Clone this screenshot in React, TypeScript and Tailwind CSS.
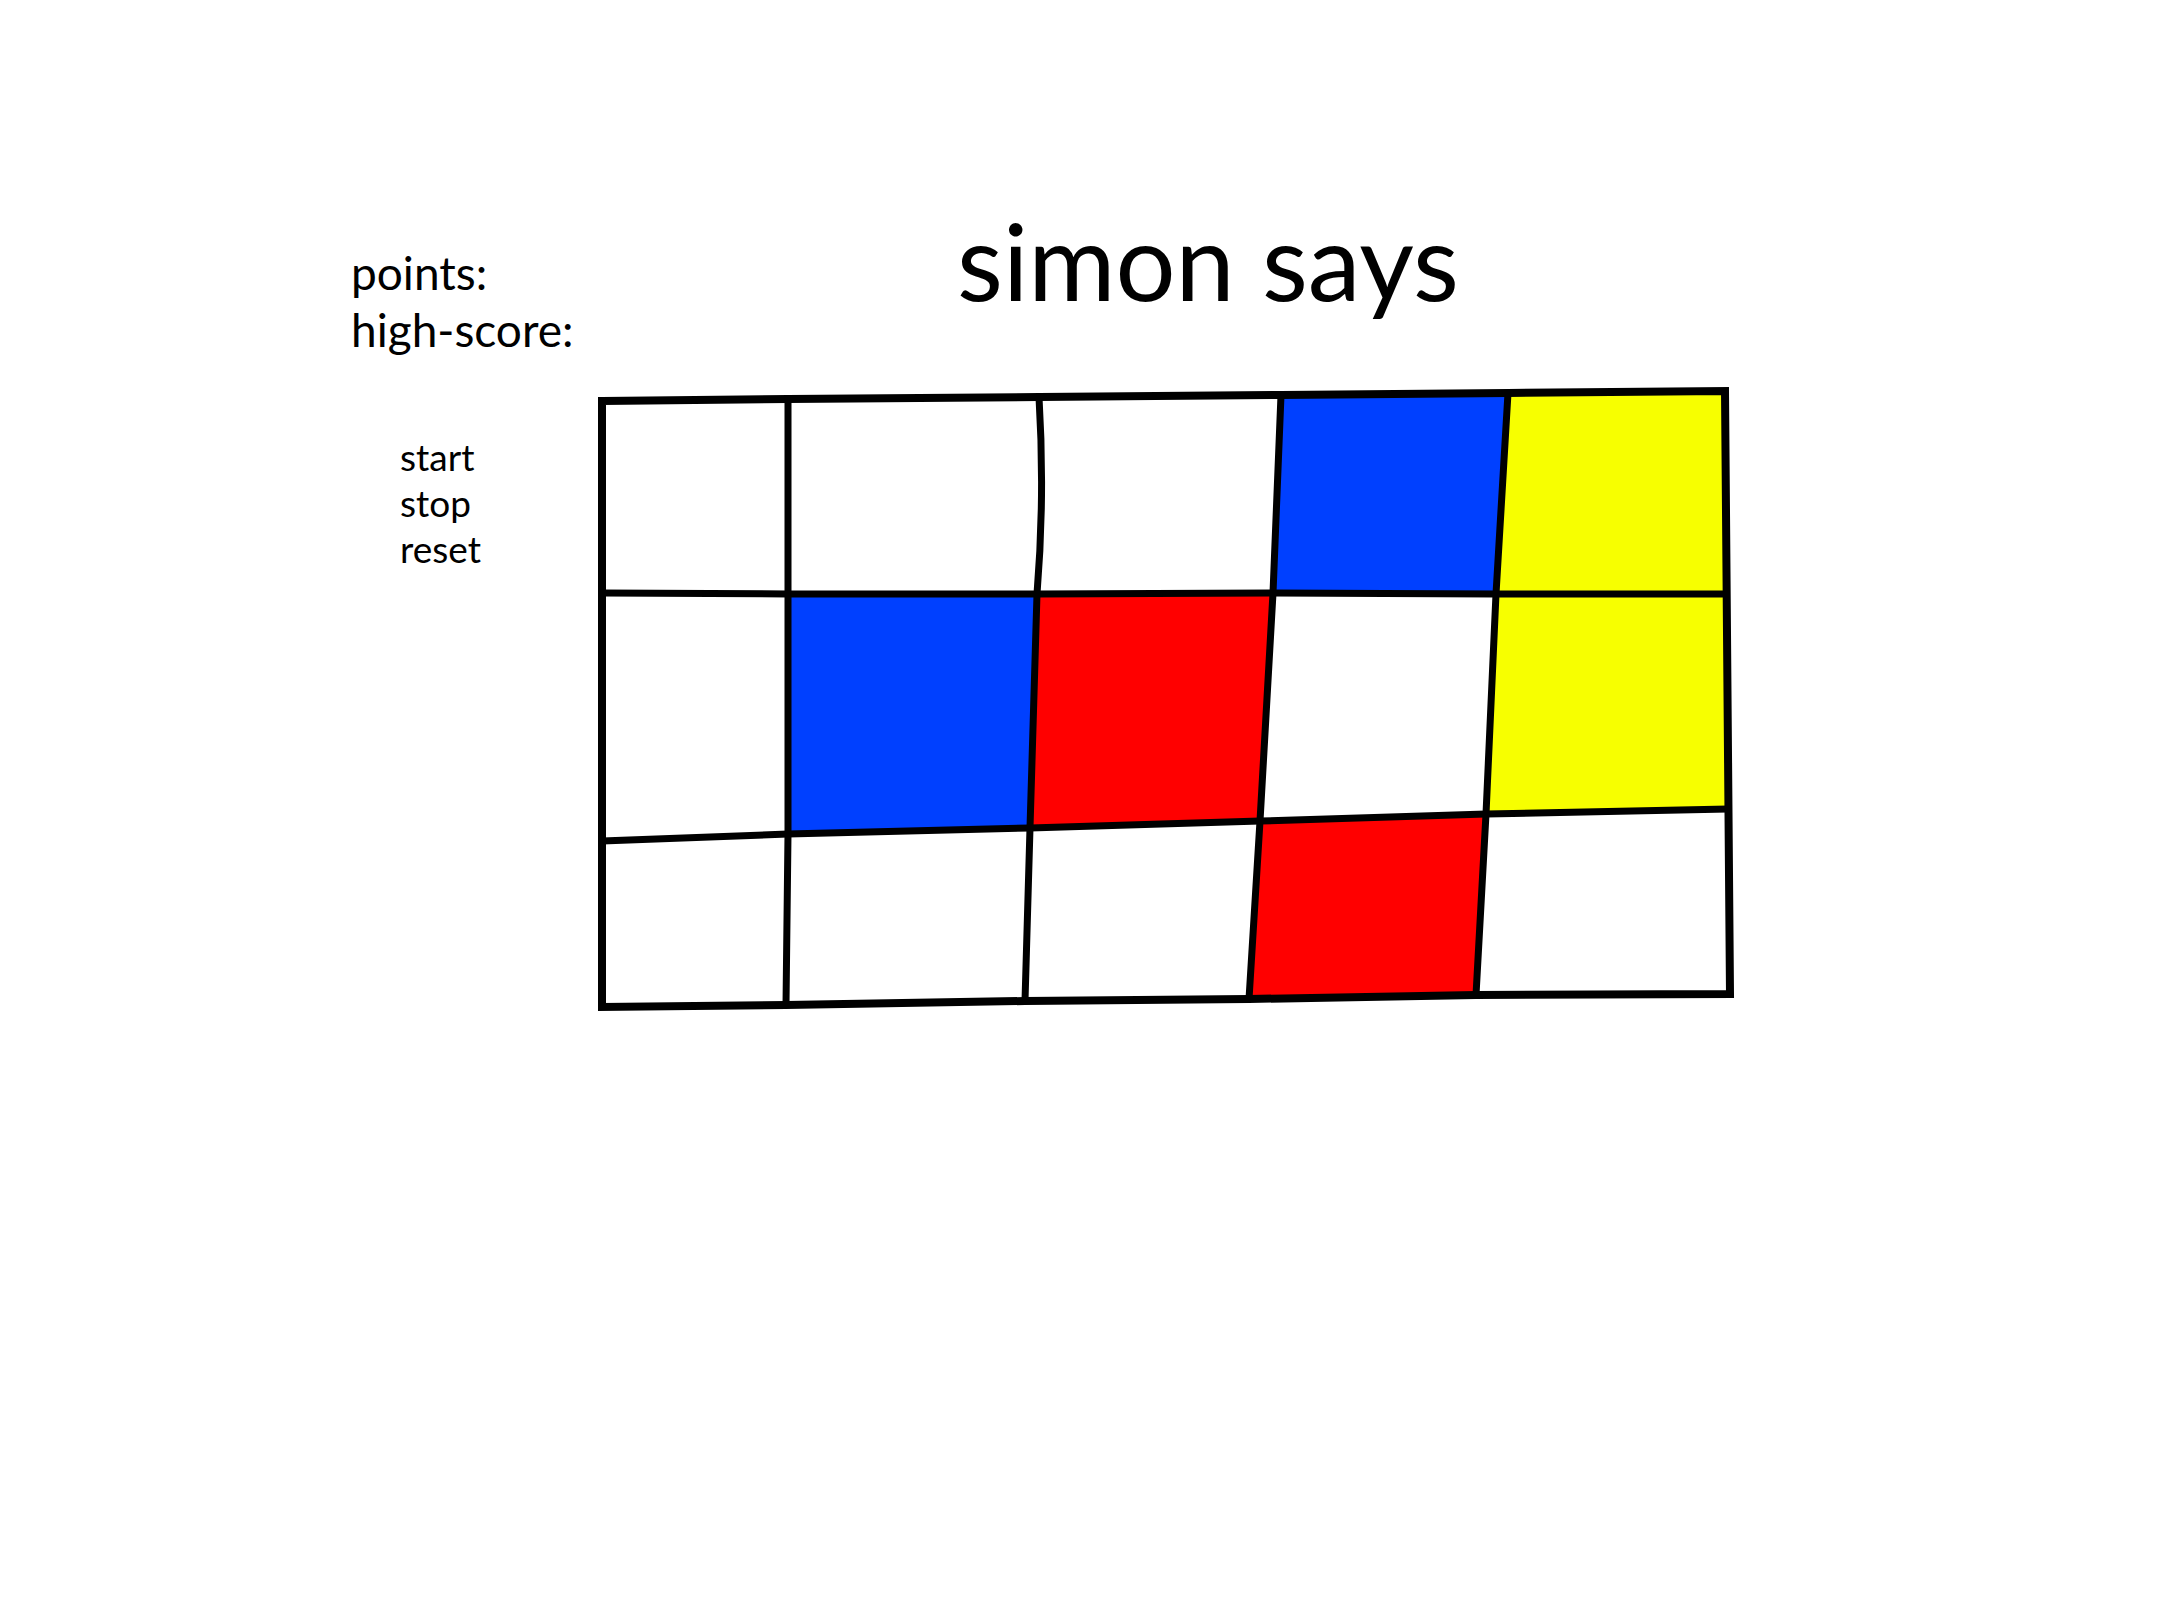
import React from "react";

type Pt = [number, number];

const P: Pt[][] = [
  [[602, 400], [788, 398], [1039, 396], [1281, 394], [1508, 392], [1725, 390]],
  [[602, 592], [788, 593], [1037, 593], [1273, 592], [1496, 593], [1726, 593]],
  [[602, 840], [788, 833], [1030, 827], [1260, 820], [1486, 813], [1728, 808]],
  [[602, 1006], [786, 1004], [1025, 1000], [1249, 998], [1476, 994], [1730, 993]],
];

const BLUE = "#0040ff";
const RED = "#ff0000";
const YELLOW = "#f7ff00";

const filled: { r: number; c: number; color: string }[] = [
  { r: 0, c: 3, color: BLUE },
  { r: 0, c: 4, color: YELLOW },
  { r: 1, c: 1, color: BLUE },
  { r: 1, c: 2, color: RED },
  { r: 1, c: 4, color: YELLOW },
  { r: 2, c: 3, color: RED },
];

const pts = (a: Pt[]) => a.map((p) => `${p[0]},${p[1]}`).join(" ");

function Grid() {
  const outer: Pt[] = [...P[0], ...[...P[3]].reverse()];
  return (
    <svg
      width={1150}
      height={635}
      viewBox="590 380 1150 635"
      className="block shrink-0"
    >
      {filled.map(({ r, c, color }) => (
        <polygon
          key={`${r}-${c}`}
          points={pts([P[r][c], P[r][c + 1], P[r + 1][c + 1], P[r + 1][c]])}
          fill={color}
        />
      ))}
      {[1, 2].map((r) => (
        <polyline
          key={`h${r}`}
          points={pts(P[r])}
          fill="none"
          stroke="#000"
          strokeWidth={7}
          strokeLinejoin="round"
        />
      ))}
      {[1, 3, 4].map((c) => (
        <polyline
          key={`v${c}`}
          points={pts([P[0][c], P[1][c], P[2][c], P[3][c]])}
          fill="none"
          stroke="#000"
          strokeWidth={7}
          strokeLinejoin="round"
        />
      ))}
      <path
        d={`M ${P[0][2][0]} ${P[0][2][1]} Q 1045 495 ${P[1][2][0]} ${P[1][2][1]} L ${P[2][2][0]} ${P[2][2][1]} L ${P[3][2][0]} ${P[3][2][1]}`}
        fill="none"
        stroke="#000"
        strokeWidth={7}
        strokeLinejoin="round"
      />
      <polygon
        points={pts(outer)}
        fill="none"
        stroke="#000"
        strokeWidth={8}
        strokeLinejoin="miter"
      />
    </svg>
  );
}

export default function App() {
  return (
    <div className="w-[2160px] h-[1620px] bg-white text-black font-['Lato',_'Noto_Sans',_sans-serif] overflow-hidden">
      <div className="flex items-start pt-[207px] pl-[351px]">
        <div className="w-[606px] mt-[37px] text-[46px] leading-[57px]">
          <div>points:</div>
          <div>high-score:</div>
        </div>
        <h1 className="text-[106px] leading-[106px] font-normal">simon says</h1>
      </div>
      <div className="flex items-start mt-[23px] pl-[400px]">
        <div className="w-[190px] pt-[53px] text-[37px] leading-[46px]">
          <div>start</div>
          <div>stop</div>
          <div>reset</div>
        </div>
        <Grid />
      </div>
    </div>
  );
}
